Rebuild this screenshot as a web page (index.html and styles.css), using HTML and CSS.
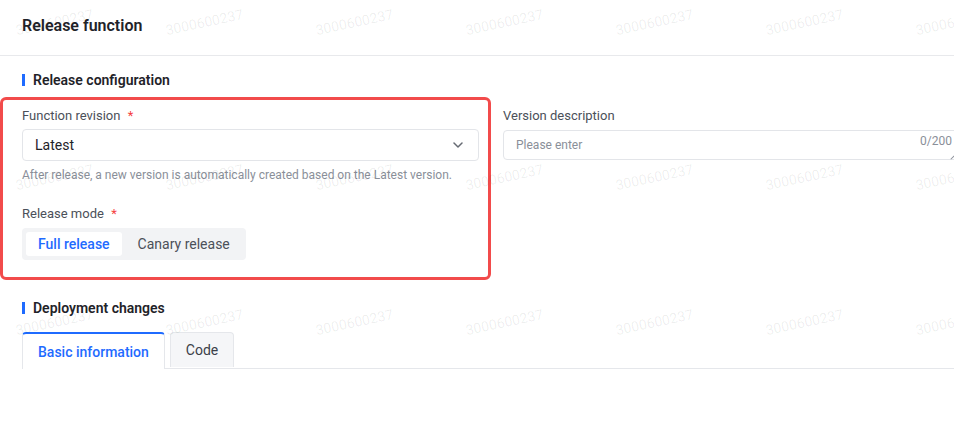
FILE: index.html
```html
<!DOCTYPE html>
<html lang="en">
<head>
    <meta charset="UTF-8">
    <meta name="viewport" content="width=device-width, initial-scale=1.0">
    <title>Release function</title>
    <link rel="stylesheet" href="styles.css">
</head>
<body>

<div class="page">
    <div class="header">
        <h1>Release function</h1>
    </div>

    <div class="content">
        <h2 class="section-title">Release configuration</h2>

        <div class="form-row">
            <!-- highlight drawn over the left column -->
            <div class="highlight"></div>

            <div class="form-col">
                <div class="form-item">
                    <label class="label">Function revision <span class="required">*</span></label>
                    <div class="select">
                        <span>Latest</span>
                        <svg class="chevron" width="10" height="6" viewBox="0 0 10 6">
                            <path d="M1 1l4 4 4-4" fill="none" stroke="#666b73" stroke-width="1.5" stroke-linecap="round" stroke-linejoin="round"/>
                        </svg>
                    </div>
                    <div class="help">After release, a new version is automatically created based on the Latest version.</div>
                </div>

                <div class="form-item">
                    <label class="label">Release mode <span class="required">*</span></label>
                    <div class="segmented">
                        <button class="segment active">Full release</button>
                        <button class="segment">Canary release</button>
                    </div>
                </div>
            </div>

            <div class="form-col wide">
                <div class="form-item">
                    <label class="label">Version description</label>
                    <div class="textarea-wrap">
                        <textarea placeholder="Please enter"></textarea>
                        <span class="counter">0/200</span>
                        <span class="resize"></span>
                    </div>
                </div>
            </div>
        </div>

        <h2 class="section-title deploy">Deployment changes</h2>

        <div class="tabs">
            <div class="tab active">Basic information</div>
            <div class="tab">Code</div>
        </div>
    </div>

    <!-- watermark layer -->
    <div class="watermark">
        <span>3000600237</span><span>3000600237</span><span>3000600237</span><span>3000600237</span><span>3000600237</span><span>3000600237</span><span>3000600237</span>
        <span>3000600237</span><span>3000600237</span><span>3000600237</span><span>3000600237</span><span>3000600237</span><span>3000600237</span><span>3000600237</span>
        <span>3000600237</span><span>3000600237</span><span>3000600237</span><span>3000600237</span><span>3000600237</span><span>3000600237</span><span>3000600237</span>
    </div>
</div>

</body>
</html>
```

FILE: styles.css
```css
body {
    margin: 0;
    font-family: Roboto, "Liberation Sans", Arial, sans-serif;
    color: #1f2329;
    background-color: #fff;
    overflow: hidden;
}
.page {
    position: relative;
    height: 423px;
    overflow: hidden;
}
.header {
    height: 56px;
    padding: 16px 22px 0;
    box-sizing: border-box;
    border-bottom: 1px solid #e8e9ec;
}
.header h1 {
    margin: 0;
    font-size: 16px;
    line-height: 20px;
    font-weight: 600;
}
.content {
    padding: 16px 0 0 22px;
}
.section-title {
    display: flex;
    align-items: center;
    margin: 0;
    font-size: 14px;
    line-height: 16px;
    font-weight: 600;
}
.section-title::before {
    content: "";
    width: 3px;
    height: 12px;
    margin-right: 8px;
    background-color: #1f6bff;
}
.section-title.deploy {
    margin-top: 40px;
}
.form-row {
    position: relative;
    display: flex;
    gap: 24px;
    margin-top: 18px;
}
.highlight {
    position: absolute;
    left: -22px;
    top: -9px;
    width: 491px;
    height: 183px;
    box-sizing: border-box;
    border: 3px solid #f24b4b;
    border-radius: 6px;
    pointer-events: none;
}
.form-col {
    width: 457px;
    flex-shrink: 0;
}
.form-item + .form-item {
    margin-top: 20px;
}
.label {
    display: block;
    font-size: 13px;
    line-height: 20px;
    color: #4b5059;
}
.required {
    color: #f53f3f;
    margin-left: 4px;
}
.select {
    display: flex;
    align-items: center;
    justify-content: space-between;
    height: 32px;
    margin-top: 3px;
    padding: 0 15px 0 12px;
    box-sizing: border-box;
    border: 1px solid #e3e5e9;
    border-radius: 4px;
    font-size: 14px;
    color: #1f2329;
}
.help {
    margin-top: 5px;
    font-size: 12px;
    line-height: 18px;
    color: #8a8f99;
}
.segmented {
    display: inline-flex;
    gap: 4px;
    margin-top: 4px;
    padding: 4px;
    background-color: #f2f3f5;
    border-radius: 4px;
}
.segment {
    height: 24px;
    padding: 0 12px;
    border: none;
    border-radius: 3px;
    background: none;
    font-family: inherit;
    font-size: 14px;
    color: #4b5059;
}
.segment.active {
    background-color: #fff;
    color: #1f6bff;
    font-weight: 500;
}
.textarea-wrap {
    position: relative;
    margin-top: 4px;
}
textarea {
    display: block;
    width: 100%;
    height: 30px;
    box-sizing: border-box;
    padding: 6px 12px;
    border: 1px solid #e3e5e9;
    border-radius: 4px;
    resize: none;
    font-family: inherit;
    font-size: 12px;
    line-height: 16px;
}
textarea::placeholder {
    color: #8a8f99;
}
.counter {
    position: absolute;
    right: 8px;
    top: 4px;
    font-size: 12px;
    color: #8a8f99;
}
.resize {
    position: absolute;
    right: 5px;
    bottom: 2px;
    width: 5px;
    height: 1px;
    background-color: #8a8f99;
    transform: rotate(-45deg);
}
.tabs {
    display: flex;
    gap: 5px;
    margin-top: 16px;
    border-bottom: 1px solid #e5e7eb;
}
.tab {
    height: 35px;
    padding: 0 15px;
    box-sizing: border-box;
    display: flex;
    align-items: center;
    border: 1px solid #e5e7eb;
    border-bottom: none;
    border-radius: 4px 4px 0 0;
    background-color: #f5f6f8;
    font-size: 14px;
    color: #3b4048;
}
.tab.active {
    height: 37px;
    margin-bottom: -1px;
    background-color: #fff;
    border-top: 2px solid #1f6bff;
    color: #1f6bff;
    font-weight: 500;
}
.watermark {
    position: absolute;
    top: 12px;
    left: 15px;
    display: grid;
    grid-template-columns: repeat(7, 150px);
    grid-template-rows: 155px 145px 20px;
    pointer-events: none;
}
.watermark span {
    font-size: 14px;
    line-height: 20px;
    color: rgba(0, 0, 0, 0.07);
    transform: rotate(-12deg);
    transform-origin: 40px 10px;
    width: 80px;
}
```
